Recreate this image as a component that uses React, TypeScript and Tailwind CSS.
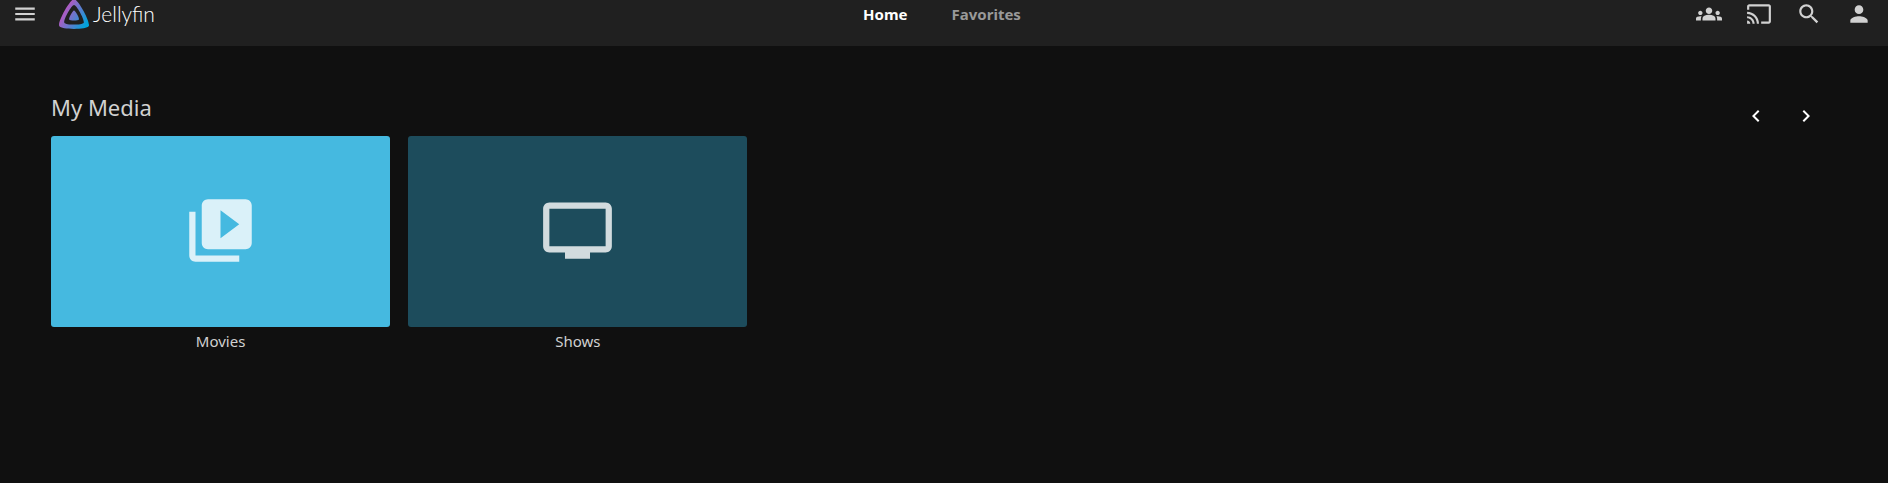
import type { ReactNode } from "react";

const icons = {
  menu: "M3 18h18v-2H3v2zm0-5h18v-2H3v2zm0-7v2h18V6H3z",
  groups:
    "M12 12.75c1.63 0 3.07.39 4.24.9 1.08.48 1.76 1.56 1.76 2.73V18H6v-1.61c0-1.18.68-2.26 1.76-2.73 1.17-.52 2.61-.91 4.24-.91zM4 13c1.1 0 2-.9 2-2s-.9-2-2-2-2 .9-2 2 .9 2 2 2zm1.13 1.1c-.37-.06-.74-.1-1.13-.1-.99 0-1.93.21-2.78.58C.48 14.9 0 15.62 0 16.43V18h4.5v-1.61c0-.83.23-1.61.63-2.29zM20 13c1.1 0 2-.9 2-2s-.9-2-2-2-2 .9-2 2 .9 2 2 2zm4 3.43c0-.81-.48-1.53-1.22-1.85-.85-.37-1.79-.58-2.78-.58-.39 0-.76.04-1.13.1.4.68.63 1.46.63 2.29V18H24v-1.57zM12 6c1.66 0 3 1.34 3 3s-1.34 3-3 3-3-1.34-3-3 1.34-3 3-3z",
  cast: "M21 3H3c-1.1 0-2 .9-2 2v3h2V5h18v14h-7v2h7c1.1 0 2-.9 2-2V5c0-1.1-.9-2-2-2zM1 18v3h3c0-1.66-1.34-3-3-3zm0-4v2c2.76 0 5 2.24 5 5h2c0-3.87-3.13-7-7-7zm0-4v2c4.97 0 9 4.03 9 9h2c0-6.08-4.93-11-11-11z",
  search:
    "M15.5 14h-.79l-.28-.27C15.41 12.59 16 11.11 16 9.5 16 5.91 13.09 3 9.5 3S3 5.91 3 9.5 5.91 16 9.5 16c1.61 0 3.09-.59 4.23-1.57l.27.28v.79l5 4.99L20.49 19l-4.99-5zm-6 0C7.01 14 5 11.99 5 9.5S7.01 5 9.5 5 14 7.01 14 9.5 11.99 14 9.5 14z",
  person:
    "M12 12c2.21 0 4-1.79 4-4s-1.79-4-4-4-4 1.79-4 4 1.79 4 4 4zm0 2c-2.67 0-8 1.34-8 4v2h16v-2c0-2.66-5.33-4-8-4z",
  left: "M15.41 7.41L14 6l-6 6 6 6 1.41-1.41L10.83 12z",
  right: "M10 6L8.59 7.41 13.17 12l-4.58 4.59L10 18l6-6z",
  movies:
    "M4 6H2v14c0 1.1.9 2 2 2h14v-2H4V6zm16-4H8c-1.1 0-2 .9-2 2v12c0 1.1.9 2 2 2h12c1.1 0 2-.9 2-2V4c0-1.1-.9-2-2-2zm-8 12.5v-9l6 4.5-6 4.5z",
  tv: "M21 3H3c-1.11 0-2 .89-2 2v12c0 1.1.89 2 2 2h5v2h8v-2h5c1.1 0 1.99-.9 1.99-2L23 5c0-1.11-.9-2-2-2zm0 14H3V5h18v12z",
};

function Icon({ name, className }: { name: keyof typeof icons; className: string }) {
  return (
    <svg viewBox="0 0 24 24" fill="currentColor" aria-hidden="true" className={className}>
      <path d={icons[name]} />
    </svg>
  );
}

function IconButton({ label, children }: { label: string; children: ReactNode }) {
  return (
    <button type="button" aria-label={label} className="flex w-[50px] items-center justify-center">
      {children}
    </button>
  );
}

function Logo() {
  return (
    <svg viewBox="28 23 466 466" aria-hidden="true" className="size-[30px] shrink-0">
      <defs>
        <linearGradient id="logo" x1="126.15" y1="219.32" x2="457.68" y2="410.73" gradientUnits="userSpaceOnUse">
          <stop offset="0" stopColor="#aa5cc3" />
          <stop offset="1" stopColor="#00a4dc" />
        </linearGradient>
      </defs>
      <path
        fill="url(#logo)"
        d="M261.42,201.62c-20.44,0-86.24,119.29-76.2,139.43s142.48,19.92,152.4,0S281.86,201.63,261.42,201.62Z"
      />
      <path
        fill="url(#logo)"
        d="M261.42,23.3C199.83,23.3,1.57,382.73,31.8,443.43s429.34,60,459.24,0S323,23.3,261.42,23.3ZM411.9,390.76c-19.59,39.33-281.08,39.77-300.9,0S221.1,115.48,261.45,115.48,431.49,351.42,411.9,390.76Z"
      />
    </svg>
  );
}

const libraries = [
  { name: "Movies", icon: "movies", color: "bg-[#45b9e0]" },
  { name: "Shows", icon: "tv", color: "bg-[#1d4c5c]" },
] as const;

export default function App() {
  return (
    <div className="min-h-screen bg-[#101010] font-['Noto_Sans',sans-serif] text-[15px] text-[#d1d1d1]">
      <header className="overflow-hidden bg-[#202020] pb-[18px]">
        <div className="grid grid-cols-[1fr_auto_1fr] grid-rows-[28px] items-center">
          <div className="flex items-center">
            <IconButton label="Menu">
              <Icon name="menu" className="size-[26px]" />
            </IconButton>
            <a href="#home" className="ml-[9px] flex items-center gap-1 font-['Lato',sans-serif] text-[21px] font-light text-white">
              <Logo />
              Jellyfin
            </a>
          </div>
          <nav className="flex gap-11 pr-1 text-[15px] leading-6 font-bold">
            <a href="#home" aria-current="page" className="text-white">
              Home
            </a>
            <a href="#favorites" className="text-[#999999]">
              Favorites
            </a>
          </nav>
          <div className="flex justify-end pr-1">
            <IconButton label="SyncPlay">
              <Icon name="groups" className="size-[26px]" />
            </IconButton>
            <IconButton label="Cast">
              <Icon name="cast" className="size-[26px]" />
            </IconButton>
            <IconButton label="Search">
              <Icon name="search" className="size-[26px]" />
            </IconButton>
            <IconButton label="User">
              <Icon name="person" className="size-[26px]" />
            </IconButton>
          </div>
        </div>
      </header>

      <main className="px-[51px] pt-[46px]">
        <div className="flex h-11 items-start justify-between">
          <h2 className="text-[22px] leading-[30px]">My Media</h2>
          <div className="flex pt-3 pr-1.5 text-white">
            <IconButton label="Previous">
              <Icon name="left" className="size-6" />
            </IconButton>
            <IconButton label="Next">
              <Icon name="right" className="size-6" />
            </IconButton>
          </div>
        </div>
        <div className="grid grid-cols-5">
          {libraries.map((library) => (
            <a key={library.name} href={`#${library.name.toLowerCase()}`} className="block pr-[18px] text-center">
              <div className={`flex aspect-video items-center justify-center rounded-[3px] pb-px ${library.color}`}>
                <Icon name={library.icon} className="size-[75px] text-white/80" />
              </div>
              <div className="pt-1 leading-5">{library.name}</div>
            </a>
          ))}
        </div>
      </main>
    </div>
  );
}
